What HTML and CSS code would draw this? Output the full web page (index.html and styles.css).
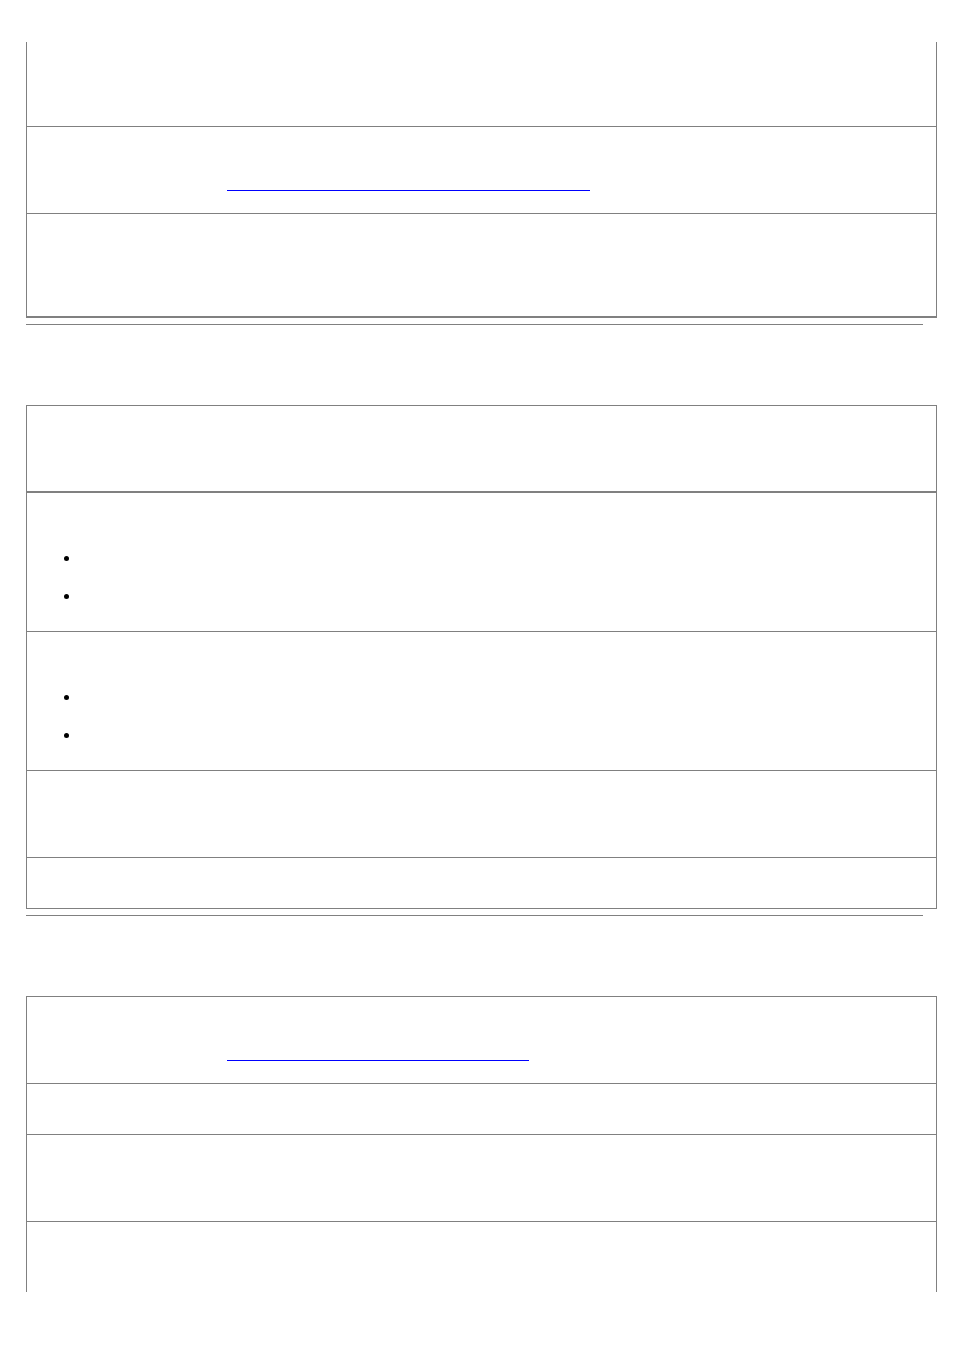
FILE: index.html
```html
<!DOCTYPE html>
<html lang="en">
<head>
  <meta charset="UTF-8">
  <meta name="viewport" content="width=device-width, initial-scale=1.0">
  <title>Manual Page</title>
  <link rel="stylesheet" href="styles.css">
</head>
<body>

  <div class="page">

    <!-- Table continued from previous page -->
    <div class="doc-table continued">
      <div class="row h84"></div>
      <div class="row h86 split">
        <div class="label"></div>
        <div class="value"><a class="link w363" href="#"></a></div>
      </div>
      <div class="row h102 thick"></div>
    </div>

    <hr class="rule">

    <div class="doc-table boxed">
      <div class="row h85 thick"></div>
      <div class="row h138">
        <ul class="bullets">
          <li></li>
          <li></li>
        </ul>
      </div>
      <div class="row h138">
        <ul class="bullets">
          <li></li>
          <li></li>
        </ul>
      </div>
      <div class="row h86"></div>
      <div class="row h50 last"></div>
    </div>

    <hr class="rule">

    <!-- Table continues on next page -->
    <div class="doc-table boxed open">
      <div class="row h86 split">
        <div class="label"></div>
        <div class="value"><a class="link w302" href="#"></a></div>
      </div>
      <div class="row h50"></div>
      <div class="row h86"></div>
      <div class="row h70 last"></div>
    </div>

  </div>

</body>
</html>
```

FILE: styles.css
```css
body {
  font-family: Verdana, "DejaVu Sans", sans-serif;
  font-size: 13px;
  background: #fff;
  color: #000;
  margin: 0;
}
.page {
  padding: 42px 0 0 26px;
}
.doc-table {
  width: 911px;
  box-sizing: border-box;
  border-left: 1px solid #808080;
  border-right: 1px solid #808080;
}
.doc-table.boxed {
  border-top: 1px solid #808080;
  border-bottom: 1px solid #808080;
}
.doc-table.open {
  border-bottom: none;
}
.row {
  border-bottom: 1px solid #808080;
}
.row.thick {
  border-bottom-width: 2px;
}
.row.last {
  border-bottom: none;
}
.h50 { height: 50px; }
.h70 { height: 70px; }
.h84 { height: 84px; }
.h85 { height: 85px; }
.h86 { height: 86px; }
.h102 { height: 102px; }
.h138 { height: 138px; }

.split {
  display: grid;
  grid-template-columns: 200px 1fr;
}
.link {
  display: block;
  margin-top: 63px;
  height: 0;
  border-bottom: 1px solid #0000ff;
  color: #0000ff;
}
.w363 { width: 363px; }
.w302 { width: 302px; }

.bullets {
  list-style: none;
  margin: 0;
  padding: 46px 0 0 0;
}
.bullets li {
  display: flex;
  align-items: center;
  height: 38px;
}
.bullets li::before {
  content: '';
  width: 5px;
  height: 5px;
  border-radius: 50%;
  background: #000;
  margin-left: 37px;
}
.rule {
  width: 897px;
  margin: 6px 0 80px 0;
  border: none;
  border-top: 1px solid #808080;
  height: 0;
}
```
